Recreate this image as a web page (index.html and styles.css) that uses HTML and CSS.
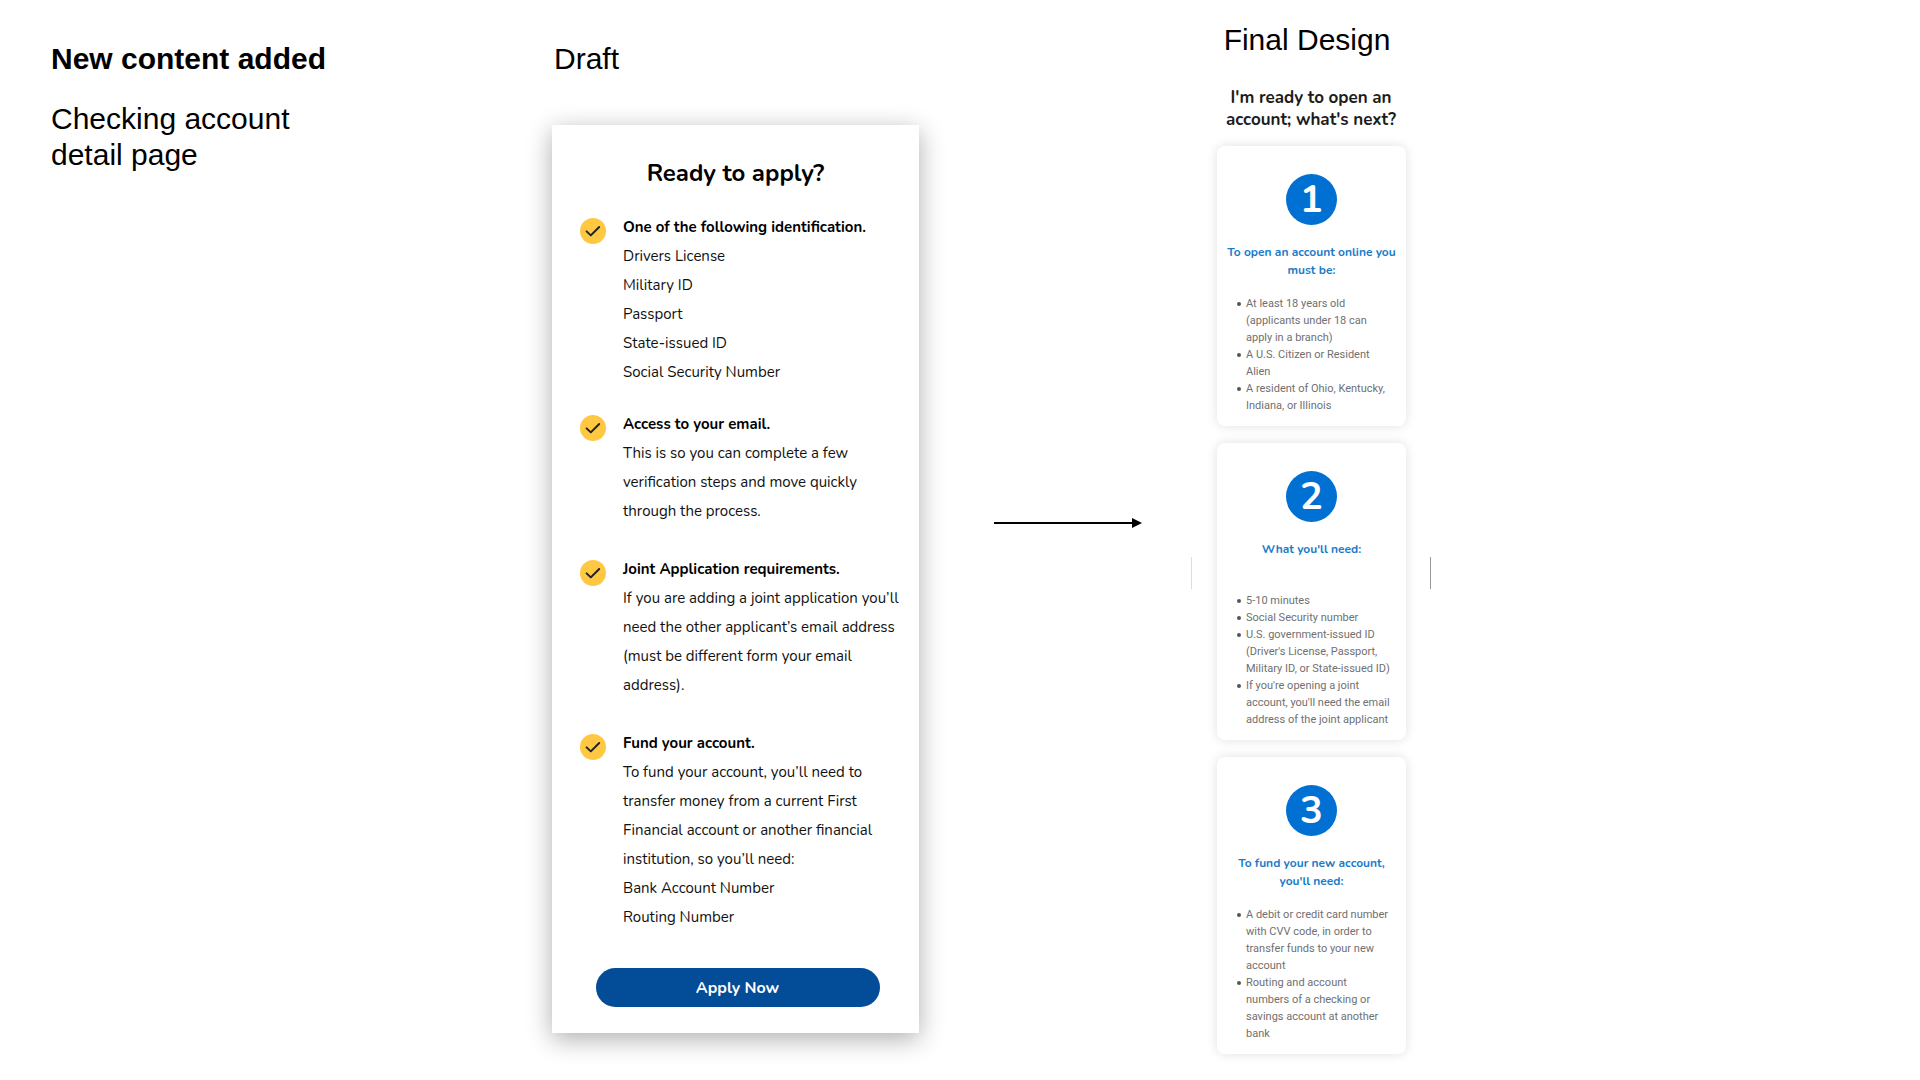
FILE: index.html
```html
<!DOCTYPE html>
<html lang="en">
<head>
  <meta charset="UTF-8">
  <title>Checking account detail page</title>
  <link rel="stylesheet" href="styles.css">
</head>
<body>

<!-- check mark shared by the draft list -->
<svg width="0" height="0" class="defs">
  <symbol id="check" viewBox="0 0 26 26">
    <circle cx="13" cy="13" r="13" fill="#ffc843"/>
    <path d="M6.6 13.4 L10.8 17.4 L19.2 9" fill="none" stroke="#222" stroke-width="2" stroke-linecap="round" stroke-linejoin="round"/>
  </symbol>
</svg>

<main class="board">

  <section class="intro">
    <h1>New content added</h1>
    <p>Checking account<br>detail page</p>
  </section>

  <section class="draft">
    <h2 class="label">Draft</h2>
    <div class="sheet">
      <h3>Ready to apply?</h3>
      <ul class="checks">
        <li>
          <svg class="tick"><use href="#check"/></svg>
          <div>
            <h4>One of the following identification.</h4>
            <p>Drivers License<br>Military ID<br>Passport<br>State-issued ID<br>Social Security Number</p>
          </div>
        </li>
        <li>
          <svg class="tick"><use href="#check"/></svg>
          <div>
            <h4>Access to your email.</h4>
            <p>This is so you can complete a few<br>verification steps and move quickly<br>through the process.</p>
          </div>
        </li>
        <li>
          <svg class="tick"><use href="#check"/></svg>
          <div>
            <h4>Joint Application requirements.</h4>
            <p>If you are adding a joint application you’ll<br>need the other applicant’s email address<br>(must be different form your email<br>address).</p>
          </div>
        </li>
        <li>
          <svg class="tick"><use href="#check"/></svg>
          <div>
            <h4>Fund your account.</h4>
            <p>To fund your account, you’ll need to<br>transfer money from a current First<br>Financial account or another financial<br>institution, so you’ll need:<br>Bank Account Number<br>Routing Number</p>
          </div>
        </li>
      </ul>
      <button class="apply">Apply Now</button>
    </div>
  </section>

  <div class="arrow"><span class="line"></span><span class="head"></span></div>

  <section class="final">
    <h2 class="label">Final Design</h2>
    <h3>I'm ready to open an<br>account; what's next?</h3>
    <div class="steps">
      <article class="card">
        <div class="number">1</div>
        <h4>To open an account online you<br>must be:</h4>
        <ul>
          <li>At least 18 years old<br>(applicants under 18 can<br>apply in a branch)</li>
          <li>A U.S. Citizen or Resident<br>Alien</li>
          <li>A resident of Ohio, Kentucky,<br>Indiana, or Illinois</li>
        </ul>
      </article>
      <article class="card">
        <div class="number">2</div>
        <h4>What you'll need:</h4>
        <ul>
          <li>5-10 minutes</li>
          <li>Social Security number</li>
          <li>U.S. government-issued ID<br>(Driver's License, Passport,<br>Military ID, or State-issued ID)</li>
          <li>If you're opening a joint<br>account, you'll need the email<br>address of the joint applicant</li>
        </ul>
      </article>
      <article class="card">
        <div class="number">3</div>
        <h4>To fund your new account,<br>you'll need:</h4>
        <ul>
          <li>A debit or credit card number<br>with CVV code, in order to<br>transfer funds to your new<br>account</li>
          <li>Routing and account<br>numbers of a checking or<br>savings account at another<br>bank</li>
        </ul>
      </article>
      <div class="edges"></div>
    </div>
  </section>

</main>

</body>
</html>
```
FILE: styles.css
```css
* {
  box-sizing: border-box;
}

body {
  margin: 0;
  background: #fff;
  color: #000;
  font-family: "Liberation Sans", Arial, sans-serif;
}

h1, h2, h3, h4, p, ul {
  margin: 0;
  padding: 0;
}

.defs {
  position: absolute;
}

.board {
  display: grid;
  grid-template-columns: minmax(0, 501fr) minmax(0, 367fr) minmax(0, 272fr) minmax(0, 240fr) minmax(0, 489fr);
  padding: 0 0 24px 51px;
}

.intro {
  padding-top: 41px;
  font-size: 30px;
  line-height: 36px;
}

.intro h1 {
  font-size: 30px;
  margin-bottom: 24px;
}

.label {
  font-size: 30px;
  line-height: 36px;
  font-weight: normal;
}

/* draft */

.draft {
  padding-top: 41px;
  font-family: Nunito, Lato, sans-serif;
}

.draft .label {
  font-family: "Liberation Sans", Arial, sans-serif;
  margin-bottom: 48px;
  padding-left: 2px;
}

.sheet {
  padding: 33px 24px 26px 28px;
  background: #fff;
  box-shadow: 0 6px 24px rgba(0, 0, 0, 0.32);
}

.sheet h3 {
  font-size: 24px;
  line-height: 30px;
  text-align: center;
  margin-bottom: 24px;
  padding-right: 4px;
}

.checks {
  list-style: none;
}

.checks li {
  display: flex;
  gap: 17px;
  margin-bottom: 28px;
  font-size: 15px;
  line-height: 29px;
  color: #111;
  white-space: nowrap;
}

.checks li:first-child {
  margin-bottom: 22px;
}

.checks li:last-child {
  margin-bottom: 36px;
}

.checks h4 {
  font-size: 15px;
  line-height: 30px;
  color: #000;
}

.tick {
  flex: none;
  width: 26px;
  height: 26px;
  margin-top: 6px;
}

.apply {
  display: block;
  width: 284px;
  height: 39px;
  margin: 0 auto;
  border: none;
  border-radius: 20px;
  background: #034c97;
  color: #fff;
  font-family: inherit;
  font-size: 16px;
  font-weight: bold;
  cursor: pointer;
}

/* arrow between the two designs */

.arrow {
  display: flex;
  align-items: center;
  height: 10px;
  margin: 518px 49px 0 75px;
}

.arrow .line {
  flex: 1;
  height: 2px;
  background: #000;
}

.arrow .head {
  border-left: 10px solid #000;
  border-top: 5px solid transparent;
  border-bottom: 5px solid transparent;
}

/* final design */

.final {
  padding-top: 22px;
  text-align: center;
}

.final .label {
  padding-right: 8px;
}

.final h3 {
  margin: 29px 0 15px;
  font-family: Nunito, Lato, sans-serif;
  font-size: 17px;
  line-height: 22px;
  color: #1c1c1c;
}

.steps {
  position: relative;
  display: flex;
  flex-direction: column;
  gap: 17px;
  padding: 0 25px 0 26px;
}

.card {
  padding: 28px 0 12px;
  border-radius: 8px;
  background: #fff;
  box-shadow: 0 0 12px rgba(0, 0, 0, 0.12);
}

.number {
  width: 51px;
  height: 51px;
  margin: 0 auto 18px;
  border-radius: 50%;
  background: #0070d2;
  color: #fff;
  font-family: Nunito, Lato, sans-serif;
  font-size: 38px;
  font-weight: bold;
  line-height: 51px;
}

.card h4 {
  min-height: 36px;
  margin-bottom: 16px;
  font-family: Nunito, Lato, sans-serif;
  font-size: 12px;
  line-height: 18px;
  color: #1a7cc9;
  white-space: nowrap;
}

.card ul {
  padding-left: 29px;
  font-family: Roboto, sans-serif;
  font-size: 11px;
  line-height: 17px;
  color: #707070;
  text-align: left;
  list-style: none;
  white-space: nowrap;
}

.card li {
  position: relative;
}

.card li::before {
  content: "";
  position: absolute;
  left: -9px;
  top: 7px;
  width: 4px;
  height: 4px;
  border-radius: 50%;
  background: #555;
}

/* carousel edges peeking out on both sides */
.edges {
  position: absolute;
  top: 411px;
  left: 0;
  right: 0;
  height: 32px;
  border-left: 1px solid #ddd;
  border-right: 1px solid #999;
}
```
